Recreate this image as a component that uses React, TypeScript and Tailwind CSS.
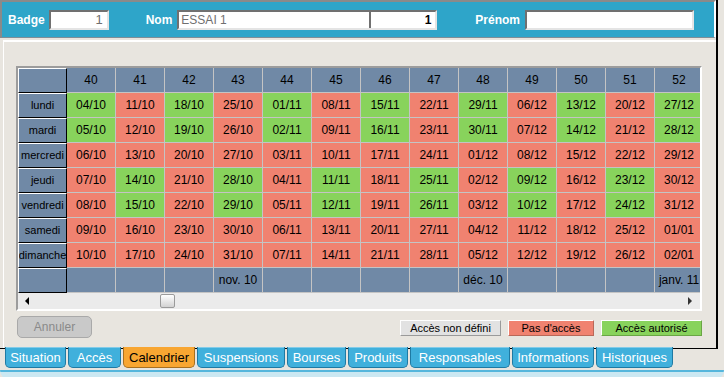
import React from 'react';

const weeks = [40, 41, 42, 43, 44, 45, 46, 47, 48, 49, 50, 51, 52];
const days = ['lundi', 'mardi', 'mercredi', 'jeudi', 'vendredi', 'samedi', 'dimanche'];
const months: Record<number, string> = { 3: 'nov. 10', 8: 'déc. 10', 12: 'janv. 11' };

function dateOf(week: number, day: number) {
  const d = new Date(2010, 9, 4 + week * 7 + day);
  const dd = String(d.getDate()).padStart(2, '0');
  const mm = String(d.getMonth() + 1).padStart(2, '0');
  return `${dd}/${mm}`;
}

function isAllowed(week: number, day: number) {
  if (day === 0 || day === 1) return week % 2 === 0;
  if (day === 3 || day === 4) return week % 2 === 1;
  return false;
}

const tabs = [
  { label: 'Situation', w: 'w-[61px]' },
  { label: 'Accès', w: 'w-[53px]' },
  { label: 'Calendrier', w: 'w-[72px]', active: true },
  { label: 'Suspensions', w: 'w-[88px]' },
  { label: 'Bourses', w: 'w-[59px]' },
  { label: 'Produits', w: 'w-[60px]' },
  { label: 'Responsables', w: 'w-[100px]' },
  { label: 'Informations', w: 'w-[82px]' },
  { label: 'Historiques', w: 'w-[77px]' },
];

function RowHead({ children }: { children?: React.ReactNode }) {
  return (
    <div className="h-[25px] w-[49px] shrink-0 flex items-center justify-center bg-[#7089a6] border border-t-white border-l-white border-r-black border-b-black text-[11px] text-black overflow-hidden whitespace-nowrap">
      {children}
    </div>
  );
}

function Cell({ bg, children }: { bg: string; children?: React.ReactNode }) {
  return (
    <div className={`h-[25px] w-[49px] shrink-0 flex items-center justify-center border-r border-b border-[#c4c4c4] text-[12px] text-black whitespace-nowrap ${bg}`}>
      {children}
    </div>
  );
}

export default function App() {
  return (
    <div className="relative w-[724px] h-[377px] overflow-hidden bg-[#e8e5df] font-['Liberation_Sans',Arial,sans-serif]">
      <div className="w-[718px] h-[349px] border-r-2 border-b border-black flex flex-col">
        {/* header band */}
        <div className="h-[38px] w-[716px] bg-[#2ea5c9] border-t-2 border-l-2 border-[#8a8a8a] border-r-2 border-r-white border-b border-b-[#7f8e96] flex items-center text-white font-bold text-[12px]">
          <span className="ml-[6px]">Badge</span>
          <div className="ml-[4px] w-[60px] h-[20px] bg-white border-2 border-t-[#707070] border-l-[#707070] border-b-[#e4e4e4] border-r-[#e4e4e4] flex items-center justify-end pr-[4px] text-[#6f6f6f] font-normal text-[13px]">1</div>
          <span className="ml-[37px]">Nom</span>
          <div className="ml-[5px] w-[260px] h-[20px] bg-white border-2 border-t-[#707070] border-l-[#707070] border-b-[#e4e4e4] border-r-[#e4e4e4] flex items-stretch">
            <div className="flex-1 flex items-center pl-[2px] text-[#6f6f6f] font-normal text-[12px]">ESSAI 1</div>
            <div className="w-[66px] border-l-2 border-[#707070] flex items-center justify-end pr-[4px] text-black text-[12px]">1</div>
          </div>
          <span className="ml-[38px]">Prénom</span>
          <div className="ml-[5px] w-[169px] h-[20px] bg-white border-2 border-t-[#707070] border-l-[#707070] border-b-[#e4e4e4] border-r-[#e4e4e4]" />
        </div>

        {/* content panel */}
        <div className="mt-[2px] ml-[3px] flex-1 border-t-2 border-l border-white flex flex-col">
          <div className="ml-[12px] mt-[24px] w-[686px] border-2 border-t-[#9c9c9c] border-l-[#9c9c9c] border-b-white border-r-white">
            <div className="w-[682px] overflow-hidden">
              <div className="flex">
                <RowHead />
                {weeks.map((w) => (
                  <Cell key={w} bg="bg-[#7089a6]">{w}</Cell>
                ))}
              </div>
              {days.map((day, d) => (
                <div key={day} className="flex">
                  <RowHead>{day}</RowHead>
                  {weeks.map((w, i) => (
                    <Cell key={w} bg={isAllowed(i, d) ? 'bg-[#88d35c]' : 'bg-[#f08270]'}>
                      {dateOf(i, d)}
                    </Cell>
                  ))}
                </div>
              ))}
              <div className="flex">
                <RowHead />
                {weeks.map((w, i) => (
                  <Cell key={w} bg="bg-[#7089a6]">{months[i] ?? ''}</Cell>
                ))}
              </div>
            </div>
            {/* scrollbar */}
            <div className="h-[16px] bg-[#ebebeb] flex items-center relative">
              <div className="ml-[7px] w-0 h-0 border-y-[4px] border-y-transparent border-r-[4px] border-r-black" />
              <div className="absolute left-[142px] top-[1px] w-[15px] h-[14px] rounded-[2px] border border-[#9a9a9a] bg-gradient-to-b from-white to-[#d2d2d2]" />
              <div className="ml-auto mr-[8px] w-0 h-0 border-y-[4px] border-y-transparent border-l-[4px] border-l-[#333]" />
            </div>
          </div>

          <div className="flex items-start mt-[5px]">
            <div className="ml-[13px] w-[75px] h-[22px] rounded-[5px] bg-[#c9c9c9] border border-[#a9a9a9] flex items-center justify-center text-[12px] text-[#8a8a8a]">
              Annuler
            </div>
            <div className="ml-auto mr-[14px] mt-[4px] flex gap-[7px] text-[11px] text-black">
              <div className="w-[101px] h-[16px] bg-[#e2e2e2] border border-t-white border-l-white border-b-[#9a9a9a] border-r-[#9a9a9a] flex items-center justify-center">Accès non défini</div>
              <div className="w-[86px] h-[16px] bg-[#f08270] border border-t-white border-l-white border-b-[#b96858] border-r-[#b96858] flex items-center justify-center">Pas d'accès</div>
              <div className="w-[101px] h-[16px] bg-[#88d35c] border border-t-white border-l-white border-b-[#6aa645] border-r-[#6aa645] flex items-center justify-center">Accès autorisé</div>
            </div>
          </div>
        </div>
      </div>

      {/* tabs */}
      <div className="absolute left-[5px] top-[347px] flex gap-[2px]">
        {tabs.map((t) => (
          <div
            key={t.label}
            className={`${t.w} h-[21px] pt-[2px] rounded-b-[5px] flex items-center justify-center text-[13px] border border-t-0 ${
              t.active
                ? 'bg-[#f8a632] border-[#a87020] text-black'
                : 'bg-[#40b0dc] border-[#1f7aa3] text-white shadow-[inset_0_1px_0_rgba(255,255,255,0.35)]'
            }`}
          >
            {t.label}
          </div>
        ))}
      </div>

      {/* outer frame bottom */}
      <div className="absolute left-0 right-0 top-[370px] h-[10px] border-t-2 border-[#55b6dc] bg-[#cbe8f2] rounded-bl-[10px] rounded-br-[10px]" />
    </div>
  );
}
